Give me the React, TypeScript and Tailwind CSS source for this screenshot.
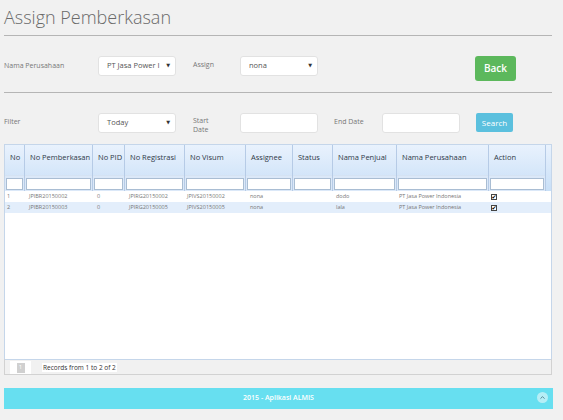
import { ChevronUp } from "lucide-react";

const font = { fontFamily: '"Open Sans", "DejaVu Sans", sans-serif' };

type Row = {
  no: string;
  berkas: string;
  pid: string;
  reg: string;
  visum: string;
  assignee: string;
  status: string;
  penjual: string;
  perusahaan: string;
};

const rows: Row[] = [
  { no: "1", berkas: "JPIBR20150002", pid: "0", reg: "JPIRG20150002", visum: "JPIVS20150002", assignee: "nona", status: "", penjual: "dodo", perusahaan: "PT Jasa Power Indonesia" },
  { no: "2", berkas: "JPIBR20150003", pid: "0", reg: "JPIRG20150005", visum: "JPIVS20150005", assignee: "nona", status: "", penjual: "lala", perusahaan: "PT Jasa Power Indonesia" },
];

const cols = [
  { label: "No", w: "w-[20px]" },
  { label: "No Pemberkasan", w: "w-[68px]" },
  { label: "No PID", w: "w-[32px]" },
  { label: "No Registrasi", w: "w-[60px]" },
  { label: "No Visum", w: "w-[61px]" },
  { label: "Assignee", w: "w-[47px]" },
  { label: "Status", w: "w-[40px]" },
  { label: "Nama Penjual", w: "w-[64px]" },
  { label: "Nama Perusahaan", w: "w-[92px]" },
  { label: "Action", w: "w-[57px]" },
];

function Select({ value }: { value: string }) {
  return (
    <div className="flex h-[20px] w-[78px] items-center justify-between whitespace-nowrap rounded-[3px] border border-[#e2e2e2] bg-white pl-[8px] pr-[5px] text-[7.5px] text-[#555]">
      <span>{value}</span>
      <span className="ml-[3px] text-[5px] text-[#333]">▼</span>
    </div>
  );
}

function Input() {
  return <div className="h-[20px] w-[78px] rounded-[3px] border border-[#e2e2e2] bg-white" />;
}

function Check() {
  return (
    <span className="flex h-[6px] w-[6px] items-center justify-center border border-[#444] bg-white text-[6px] leading-none text-black">
      ✔
    </span>
  );
}

export default function App() {
  return (
    <div className="h-[420px] w-[563px] overflow-hidden bg-[#f1f1f1] pl-[4px] pr-[11px]" style={font}>
      <h1 className="h-[35px] pt-[5px] text-[18px] font-light leading-[24px] text-[#6a6a6a]">
        Assign Pemberkasan
      </h1>
      <div className="border-t border-[#b5b5b5]" />

      <div className="flex h-[56px] items-start pt-[20px] text-[7px] text-[#777]">
        <span className="w-[94px] pt-[5px]">Nama Perusahaan</span>
        <Select value="PT Jasa Power I" />
        <span className="ml-[17px] w-[47px] pt-[4px]">Assign</span>
        <Select value="nona" />
        <button className="ml-[157px] h-[25px] w-[41px] rounded-[3px] bg-[#5cb85c] text-[10px] font-semibold text-white">
          Back
        </button>
      </div>
      <div className="border-t border-[#b5b5b5]" />

      <div className="flex h-[51px] items-start pt-[20px] text-[7px] text-[#777]">
        <span className="w-[94px] pt-[4px]">Filter</span>
        <Select value="Today" />
        <span className="ml-[17px] w-[47px] pt-[3px] leading-[9px]">
          Start
          <br />
          Date
        </span>
        <Input />
        <span className="ml-[16px] w-[48px] pt-[4px]">End Date</span>
        <Input />
        <button className="ml-[16px] h-[19px] w-[37px] rounded-[2px] bg-[#5bc0de] text-[8px] text-white">
          Search
        </button>
      </div>

      <div className="flex h-[216px] w-[548px] flex-col border border-[#c5d6ea] bg-white">
        <div className="flex bg-gradient-to-b from-[#e9f2fd] to-[#c8dff7]">
          {cols.map((c) => (
            <div key={c.label} className={`${c.w} flex h-[46px] shrink-0 flex-col border-r border-[#b6cbe6]`}>
              <div className="flex h-[30px] items-center whitespace-nowrap pb-[4px] pl-[5px] text-[7.5px] text-[#2f3a48]">
                {c.label}
              </div>
              <div className="flex h-[16px] items-center border-t border-[#d5e3f3] bg-[#dbe8f8] px-[1px]">
                <div className="h-[12px] w-full border border-[#a9bdd3] bg-white" />
              </div>
            </div>
          ))}
          <div className="flex-1" />
        </div>
        {rows.map((r, i) => (
          <div key={r.no} className={`flex h-[11px] items-center text-[5.5px] text-[#777] ${i % 2 ? "bg-[#e3eefb]" : "bg-white"}`}>
            <div className="w-[20px] shrink-0 pl-[2px]">{r.no}</div>
            <div className="w-[68px] shrink-0 pl-[4px]">{r.berkas}</div>
            <div className="w-[32px] shrink-0 pl-[4px]">{r.pid}</div>
            <div className="w-[60px] shrink-0 pl-[4px]">{r.reg}</div>
            <div className="w-[61px] shrink-0 pl-[2px]">{r.visum}</div>
            <div className="w-[47px] shrink-0 pl-[4px]">{r.assignee}</div>
            <div className="w-[40px] shrink-0 pl-[4px]">{r.status}</div>
            <div className="w-[64px] shrink-0 pl-[3px]">{r.penjual}</div>
            <div className="w-[92px] shrink-0 pl-[2px]">{r.perusahaan}</div>
            <div className="w-[57px] shrink-0 pl-[2px]">
              <Check />
            </div>
          </div>
        ))}
      </div>

      <div className="relative mt-[-1px] h-[16px] w-[548px] border-x border-b border-[#d2d2d2]">
        <div className="absolute left-[5px] top-[2px] flex h-[13px] w-[21px] items-center justify-center bg-white">
          <span className="flex h-[10px] w-[8px] items-center justify-center bg-[#d0d0d0] text-[6px] text-white">1</span>
        </div>
        <div className="absolute left-[37px] top-[4px] bg-white px-[1px] text-[6.5px] leading-[9px] text-[#333]">
          Records from 1 to 2 of 2
        </div>
      </div>

      <div className="relative mt-[13px] flex h-[21px] w-[549px] items-center justify-center bg-[#67dff0] text-[7px] font-semibold text-white">
        2015 - Aplikasi ALMIS
        <span className="absolute right-[5px] top-[4px] flex h-[11px] w-[11px] items-center justify-center rounded-full bg-[#b6eef6]">
          <ChevronUp size={7} strokeWidth={3} className="text-[#4a7a88]" />
        </span>
      </div>
    </div>
  );
}
